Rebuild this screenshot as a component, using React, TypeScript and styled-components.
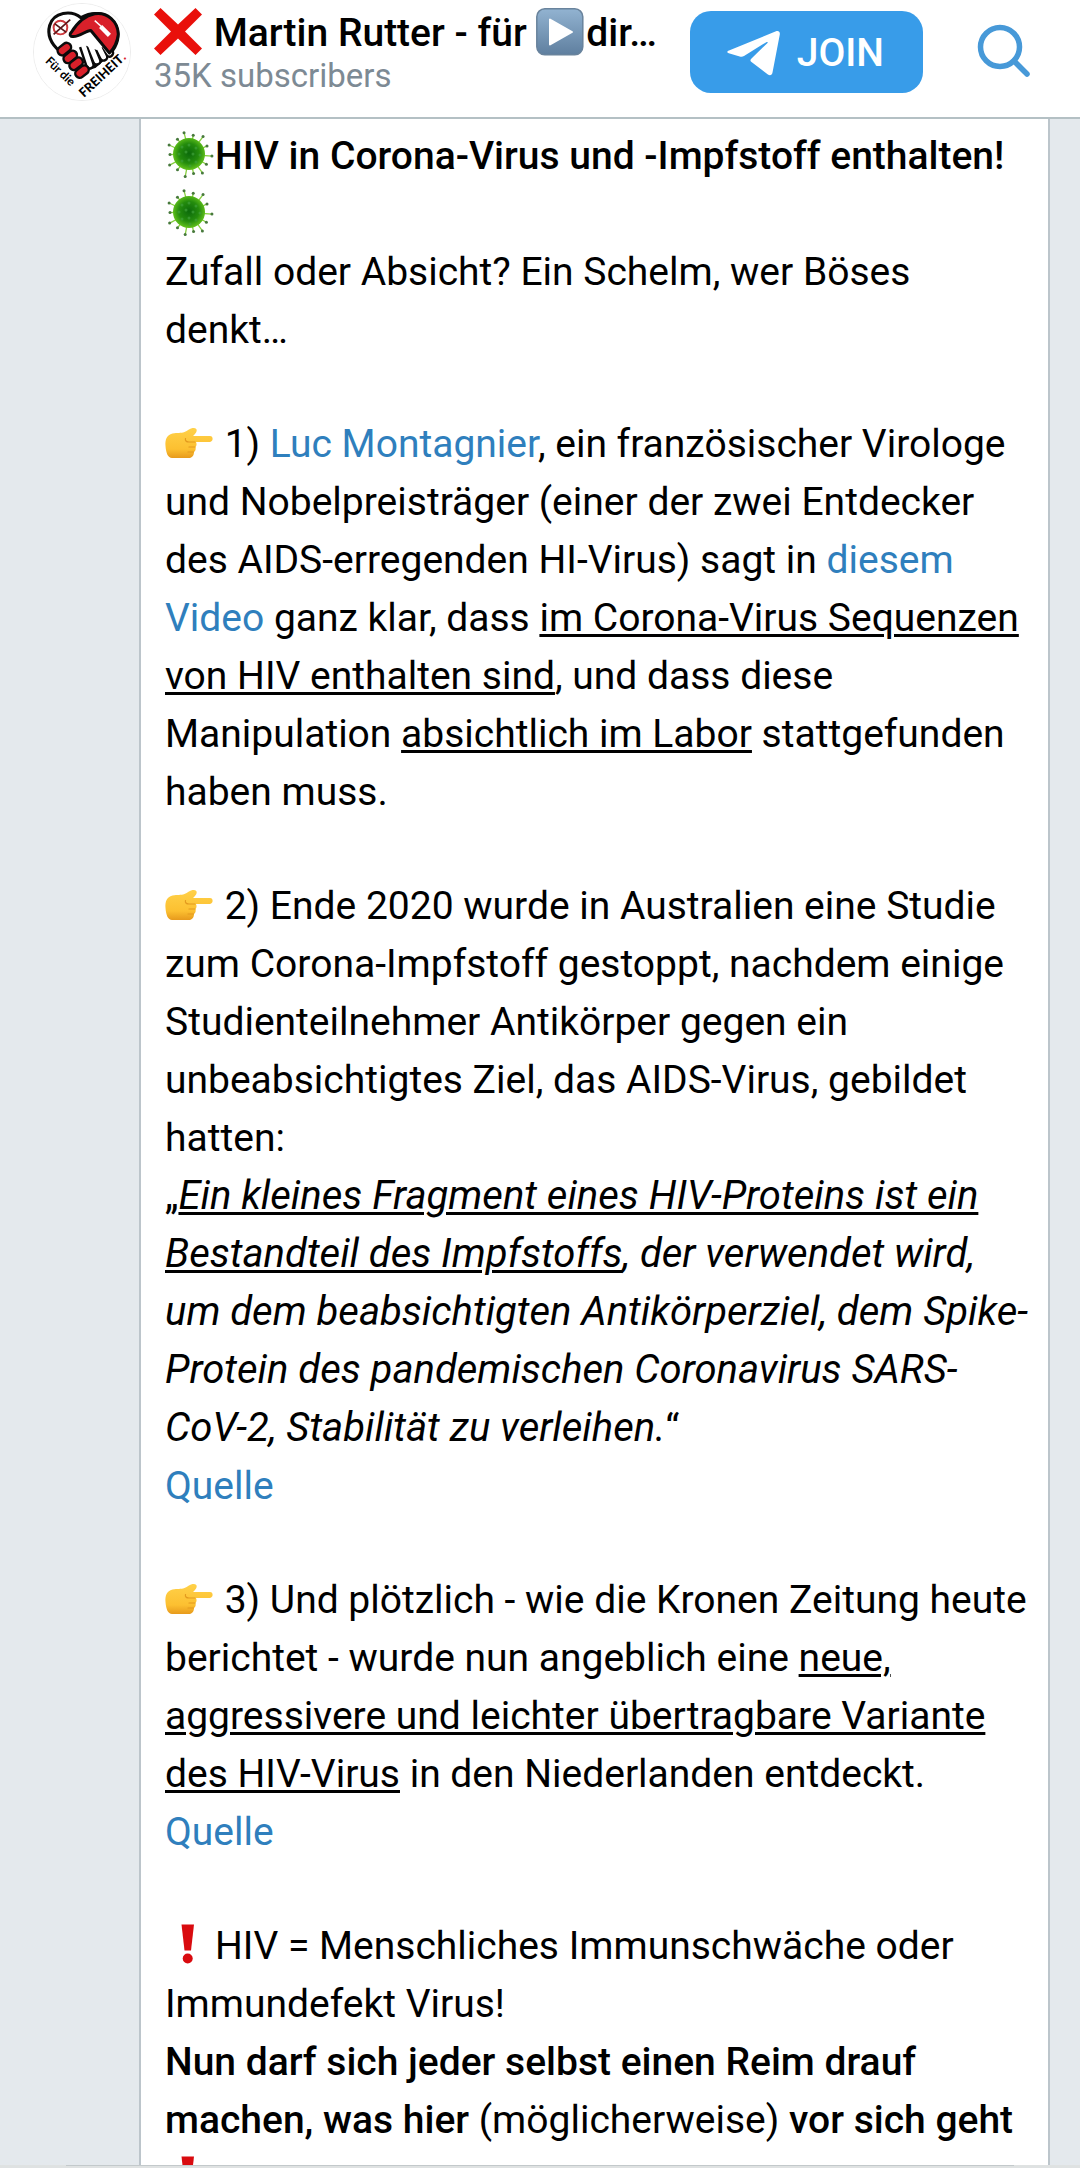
import React from "react";
import styled, { createGlobalStyle } from "styled-components";

const GlobalStyle = createGlobalStyle`
  * { box-sizing: border-box; }
  body {
    margin: 0;
    background: #fff;
    color: #000;
    font-family: Roboto, "Liberation Sans", sans-serif;
  }
`;

const Page = styled.div`
  display: flex;
  flex-direction: column;
  height: 100vh;
  padding-bottom: 10px;
`;

const Header = styled.header`
  display: flex;
  align-items: flex-start;
  flex: none;
  height: 119px;
  padding: 0 49px 0 33px;
  border-bottom: 2px solid #b4c0c4;
`;

const Avatar = styled.a`
  flex: none;
  width: 98px;
  height: 98px;
  margin-top: 3px;
  border: 1px solid #ececec;
  border-radius: 50%;
  overflow: hidden;
  svg { display: block; width: 100%; height: 100%; }
`;

const Channel = styled.div`
  flex: 1;
  min-width: 0;
  margin: 8px 0 0 23px;
`;

const Title = styled.h1`
  margin: 0;
  font-size: 39px;
  line-height: 46px;
  font-weight: 500;
  white-space: nowrap;
`;

const Subscribers = styled.p`
  margin: 0;
  font-size: 33px;
  line-height: 40px;
  color: #7d8a94;
`;

const JoinButton = styled.button`
  display: flex;
  align-items: center;
  flex: none;
  gap: 17px;
  height: 82px;
  margin: 11px 0 0;
  padding: 2px 39px 0 37px;
  border: 0;
  border-radius: 21px;
  background: #389ce9;
  color: #fff;
  font: 500 39px/46px Roboto, "Liberation Sans", sans-serif;
  svg { width: 53px; height: 46px; }
`;

const SearchButton = styled.button`
  flex: none;
  width: 54px;
  height: 54px;
  margin: 24px 0 0 54px;
  padding: 0;
  border: 0;
  background: none;
  color: #4799d8;
  svg { display: block; width: 54px; height: 54px; }
`;

const Feed = styled.main`
  flex: 1;
  min-height: 0;
  overflow: hidden;
  padding: 0 30px 0 139px;
  background: #e4e9ed;
`;

const BottomEdge = styled.footer`
  flex: none;
  height: 3px;
  padding: 0 66px;
  background: #dfe2e2;
`;

const EdgeLine = styled.div`
  height: 1px;
  background: #c3c9cb;
`;

const Message = styled.article`
  display: flex;
  flex-direction: column;
  gap: 56px;
  padding: 8px 16px 25px 24px;
  background: #fff;
  border: solid #bcc5cb;
  border-width: 0 2px;
`;

const Paragraph = styled.p`
  margin: 0;
  font-size: 39px;
  line-height: 58px;
  b { font-weight: 500; }
  u { text-decoration-thickness: 3px; text-underline-offset: 3px; }
`;

const Quote = styled.i`
  font-size: 40px;
  line-height: 1;
`;

const Unbroken = styled.span`
  white-space: nowrap;
`;

const Link = styled.a`
  color: #2f7fbd;
  text-decoration: none;
`;

const EmojiBox = styled.svg`
  display: inline-block;
  width: 50px;
  height: 48px;
  vertical-align: -10px;
`;

const Virus = () => {
  const spikes = [4, 30, 55, 78, 101, 128, 152, 180, 205, 232, 256, 281, 307, 334];
  return (
    <EmojiBox viewBox="0 0 50 48" role="img" aria-label="Virus">
      <defs>
        <radialGradient id="virus" cx="50%" cy="48%" r="52%">
          <stop offset="0" stopColor="#0c6a0c" />
          <stop offset="0.6" stopColor="#248c0d" />
          <stop offset="1" stopColor="#62c21c" />
        </radialGradient>
      </defs>
      {spikes.map((a, i) => {
        const r = i % 2 ? 19.5 : 22.5;
        const x = 24.5 + r * Math.cos((a * Math.PI) / 180);
        const y = 23.5 + r * Math.sin((a * Math.PI) / 180);
        return (
          <g key={a}>
            <line x1="24.5" y1="23.5" x2={x} y2={y} stroke="#86cf3d" strokeWidth="1.3" />
            <circle cx={x} cy={y} r="1.5" fill="#47793c" />
          </g>
        );
      })}
      <circle cx="24" cy="23" r="16" fill="url(#virus)" />
      {[[17, 16], [24, 14], [31, 17], [14, 23], [21, 21], [28, 23], [35, 24], [17, 30], [24, 29], [31, 31], [25, 35]].map(
        ([x, y]) => (
          <circle key={x + "-" + y} cx={x} cy={y} r="1.5" fill="#3fa03a" opacity="0.7" />
        ),
      )}
    </EmojiBox>
  );
};

const Hand = () => (
  <EmojiBox viewBox="0 0 50 48" role="img" aria-label="Zeigefinger nach rechts">
    <defs>
      <linearGradient id="hand" x1="0" y1="0" x2="0" y2="1">
        <stop offset="0" stopColor="#ffd149" />
        <stop offset="0.7" stopColor="#fcc031" />
        <stop offset="1" stopColor="#e79a1c" />
      </linearGradient>
    </defs>
    <path
      d="M0.500 27c-.5-6 1-11 7-12.500 5-1 8 0 12-1.500 3-1 5-3.500 8-4 3-.5 5 1 4 3.500-.6 1.500-2 3-3.500 4.500h17c3.500 0 3.500 5.500 0 6H31c1 2 .5 4-.5 5 .5 2 0 4-1.500 5 0 3.500-2 6-5 6H7c-4 0-6-5-6.500-12z"
      fill="url(#hand)"
    />
    <path d="M30 23h-6c-3 0-4-1.500-3.500-3.500M30 28h-6M28.500 33H23" fill="none" stroke="#e39a1f" strokeWidth="1.2" strokeLinecap="round" />
  </EmojiBox>
);

const Exclamation = () => (
  <EmojiBox viewBox="0 0 50 48" role="img" aria-label="Ausrufezeichen">
    <path d="M16.500 3.500h12.500l-3 26h-6.500z" fill="#d90b0f" />
    <circle cx="22.700" cy="37.500" r="5" fill="#d90b0f" />
  </EmojiBox>
);

const Cross = () => (
  <EmojiBox viewBox="0 0 50 48" role="img" aria-label="Kreuz">
    <path d="M6.500 0L24 16.500 41.500 0 48 6.500 31 23.500 48 40.500 41.500 47 24 30.500 6.500 47 0 40.500 17 23.500 0 6.500z" fill="#e9100b" />
  </EmojiBox>
);

const Play = () => (
  <EmojiBox viewBox="0 0 50 48" role="img" aria-label="Abspielen">
    <defs>
      <linearGradient id="play" x1="0" y1="0" x2="0" y2="1">
        <stop offset="0" stopColor="#92b3d1" />
        <stop offset="1" stopColor="#5f7f9f" />
      </linearGradient>
    </defs>
    <rect x="0.800" y="0.800" width="46" height="46" rx="8" fill="url(#play)" stroke="#69839c" strokeWidth="1.500" />
    <path d="M14 11.500v25L36 24z" fill="#fff" stroke="#fff" strokeWidth="2" strokeLinejoin="round" />
  </EmojiBox>
);

const fingers = ["M49 38L57 62", "M55 36L64 58", "M61 34L71 54", "M66 34L77 50"];

const Logo = () => (
  <svg viewBox="0 0 98 98" role="img" aria-label="Für die Freiheit">
    <rect width="98" height="98" fill="#fff" />
    <path d="M48 14C38 6 20 8 16 22c-3 11 3 20 10 26l20 20 16-4 16-14c7-7 10-18 6-27C77 8 60 7 48 14z" fill="#fff" stroke="#0b0b0b" strokeWidth="3.200" />
    {fingers.map((d) => <path key={d} d={d} stroke="#0b0b0b" strokeWidth="10" strokeLinecap="round" />)}
    {fingers.map((d) => <path key={d} d={d} stroke="#fff" strokeWidth="5" strokeLinecap="round" />)}
    <path d="M40 34l18-8 14 17-8 4-12-5-10 4z" fill="#fff" />
    <path d="M38 33c-2-1-1-3 0-4 5-8 13-17 24-19 13-2 24 8 24 21-1 8-4 14-9 19L58 27c-6 0-12 8-20 6z" fill="#d9202a" stroke="#0b0b0b" strokeWidth="3" strokeLinejoin="round" />
    <path d="M62 17l9 8" stroke="#fff" strokeWidth="1.500" />
    <path d="M68 23l9 9" stroke="#fff" strokeWidth="4.500" />
    {[[31, 46], [37, 54], [43, 61], [49, 69]].map(([x, y]) => (
      <rect key={x} x={x - 7.5} y={y - 4.5} width="15" height="9" rx="4.500" transform={`rotate(-38 ${x} ${y})`} fill="#d9202a" stroke="#0b0b0b" strokeWidth="2.500" />
    ))}
    <circle cx="27" cy="24" r="7" fill="none" stroke="#cf3a3e" strokeWidth="2" />
    <path d="M20 31l17-15M21 20l12 9" stroke="#5a1a1c" strokeWidth="1.800" />
    <text transform="translate(11 59) rotate(44)" fontSize="12" fontWeight="700" fontFamily="Lato, sans-serif">Für die</text>
    <text transform="translate(51 96) rotate(-43)" fontSize="13" fontWeight="900" fontFamily="Lato, sans-serif">
      FREIHEIT<tspan fill="#d9202a">.</tspan>
    </text>
  </svg>
);

export default function App() {
  return (
    <Page>
      <GlobalStyle />
      <Header>
        <Avatar href="#kanal"><Logo /></Avatar>
        <Channel>
          <Title><Cross /> Martin Rutter - für <Play />dir…</Title>
          <Subscribers>35K subscribers</Subscribers>
        </Channel>
        <JoinButton type="button">
          <svg viewBox="0 0 53 46" aria-hidden="true">
            <path
              d="M2 20.500L49 1.200c2.500-.9 4.200.6 3.800 3.200L45.500 42.500c-.5 2.700-2.500 3.300-4.600 1.900L24.500 32c-1.500-1.200-1.400-2.400 0-3.600L40.500 13c.8-.9-.2-1.500-1.200-.8L17 26c-1.500.9-2.800 1-4.300.4L1.800 23.200c-2.100-.7-2-1.900.2-2.700z"
              fill="#fff"
            />
          </svg>
          JOIN
        </JoinButton>
        <SearchButton type="button" aria-label="Search">
          <svg viewBox="0 0 54 54" fill="none" stroke="currentColor" strokeWidth="5.500" strokeLinecap="round">
            <circle cx="23" cy="23" r="19.500" />
            <path d="M37 37l13 13" />
          </svg>
        </SearchButton>
      </Header>
      <Feed>
        <Message>
          <Paragraph>
            <Virus /><b>HIV in Corona-Virus und -Impfstoff enthalten!</b><Virus /><br />
            Zufall oder Absicht? Ein Schelm, wer Böses denkt…
          </Paragraph>
          <Paragraph>
            <Hand /> 1) <Link href="#montagnier">Luc Montagnier</Link>, ein französischer Virologe und
            Nobelpreisträger (einer der zwei Entdecker des AIDS-erregenden HI-Virus) sagt
            in <Link href="#video">diesem Video</Link> ganz klar, dass <u>im Corona-Virus Sequenzen von HIV
            enthalten sind</u>, und dass diese Manipulation <u>absichtlich im Labor</u> stattgefunden haben muss.
          </Paragraph>
          <Paragraph>
            <Hand /> 2) Ende 2020 wurde in Australien eine Studie zum Corona-Impfstoff gestoppt, nachdem einige
            Studienteilnehmer Antikörper gegen ein unbeabsichtigtes Ziel, das AIDS-Virus, gebildet hatten:<br />
            „<Quote><u>Ein kleines Fragment eines HIV-Proteins ist ein Bestandteil des Impfstoffs</u>, der verwendet
            wird, um dem beabsichtigten Antikörperziel, dem Spike-Protein des pandemischen Coronavirus
            SARS-<wbr /><Unbroken>CoV-2,</Unbroken> Stabilität zu verleihen.</Quote>“<br />
            <Link href="#quelle-studie">Quelle</Link>
          </Paragraph>
          <Paragraph>
            <Hand /> 3) Und plötzlich - wie die Kronen Zeitung heute berichtet - wurde nun angeblich
            eine <u>neue, aggressivere und leichter übertragbare Variante des HIV-Virus</u> in den Niederlanden
            entdeckt.<br />
            <Link href="#quelle-variante">Quelle</Link>
          </Paragraph>
          <Paragraph>
            <Exclamation />HIV = Menschliches Immunschwäche oder Immundefekt Virus!<br />
            <b>Nun darf sich jeder selbst einen Reim drauf machen, was hier</b> (möglicherweise) <b>vor sich
            geht</b> <Exclamation />
          </Paragraph>
        </Message>
      </Feed>
      <BottomEdge><EdgeLine /></BottomEdge>
    </Page>
  );
}
